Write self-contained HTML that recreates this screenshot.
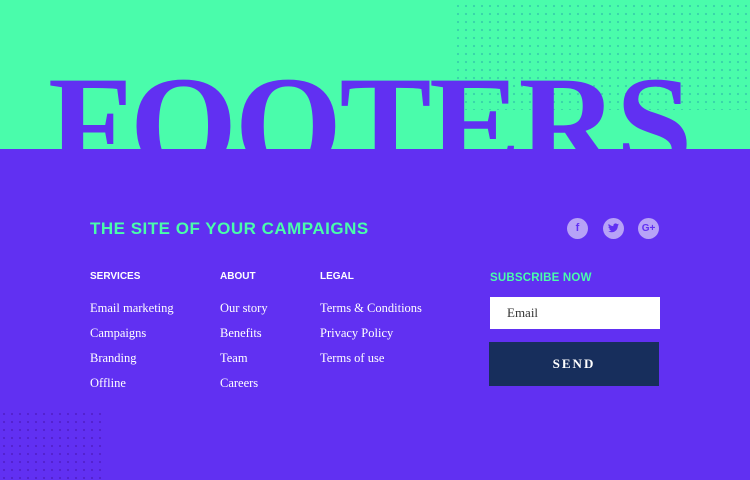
<!DOCTYPE html>
<html><head><style>
*{margin:0;padding:0;box-sizing:border-box}
body{width:750px;height:480px;background:#6130f2;position:relative;overflow:hidden;font-family:"Liberation Serif",serif}
.top{position:absolute;left:0;top:0;width:750px;height:149px;background:#4afcab;overflow:hidden}
.dots{position:absolute;background-image:radial-gradient(circle,rgba(50,200,170,.8) 0.9px,transparent 1.3px);background-size:8px 8px}
.big{position:absolute;left:48px;top:56px;font-family:"Liberation Serif",serif;font-weight:bold;font-size:138px;line-height:1;color:#6130f2;letter-spacing:-2.5px;white-space:nowrap}
.h{position:absolute;font-family:"Liberation Sans",sans-serif;font-weight:bold;color:#4afcab}
.col{position:absolute;top:271px;color:#fff}
.col b{display:block;font-family:"Liberation Sans",sans-serif;font-size:10px;letter-spacing:0;margin-bottom:19px}
.col div{font-size:12.5px;height:25px}
.ic{position:absolute;top:218px;width:21px;height:21px;border-radius:50%;background:#b7a2f7;color:#6130f2;font-family:"Liberation Sans",sans-serif;font-weight:bold;font-size:11px;text-align:center;line-height:21px}
</style></head><body>
<div class="top">
<div class="dots" style="left:452px;top:0;width:298px;height:110px;background-position:2px 2px"></div>
<div class="big">FOOTERS</div>
</div>
<div class="dots" style="left:0;top:410px;width:102px;height:70px;background-image:radial-gradient(circle,rgba(80,30,200,.9) 0.9px,transparent 1.3px)"></div>
<div class="h" style="left:90px;top:219px;font-size:17px;letter-spacing:.5px">THE SITE OF YOUR CAMPAIGNS</div>
<div class="ic" style="left:567px">f</div>
<div class="ic" style="left:603px"><svg width="11" height="10" viewBox="0 0 24 20" style="margin-top:5px"><path fill="#6130f2" d="M24 2.4a10 10 0 0 1-2.8.8A5 5 0 0 0 23.3.4a10 10 0 0 1-3.1 1.2A4.9 4.9 0 0 0 11.8 6 14 14 0 0 1 1.7.9a4.9 4.9 0 0 0 1.5 6.6A4.9 4.9 0 0 1 1 6.9a4.9 4.9 0 0 0 3.9 4.8 4.9 4.9 0 0 1-2.2.1 4.9 4.9 0 0 0 4.6 3.4A9.9 9.9 0 0 1 0 17.2 14 14 0 0 0 7.5 19.4c9.1 0 14-7.5 14-14v-.6A10 10 0 0 0 24 2.4z"/></svg></div>
<div class="ic" style="left:638px;font-size:10px">G+</div>
<div class="col" style="left:90px"><b>SERVICES</b><div>Email marketing</div><div>Campaigns</div><div>Branding</div><div>Offline</div></div>
<div class="col" style="left:220px"><b>ABOUT</b><div>Our story</div><div>Benefits</div><div>Team</div><div>Careers</div></div>
<div class="col" style="left:320px"><b>LEGAL</b><div>Terms &amp; Conditions</div><div>Privacy Policy</div><div>Terms of use</div></div>
<div class="h" style="left:490px;top:272px;font-size:11.5px;letter-spacing:.2px">SUBSCRIBE NOW</div>
<div style="position:absolute;left:490px;top:297px;width:170px;height:32px;background:#fff;color:#333;font-size:13px;padding:8px 0 0 17px">Email</div>
<div style="position:absolute;left:489px;top:342px;width:170px;height:44px;background:#172e5c;color:#fff;font-size:13px;font-weight:bold;letter-spacing:2px;text-align:center;line-height:44px">SEND</div>
</body></html>
